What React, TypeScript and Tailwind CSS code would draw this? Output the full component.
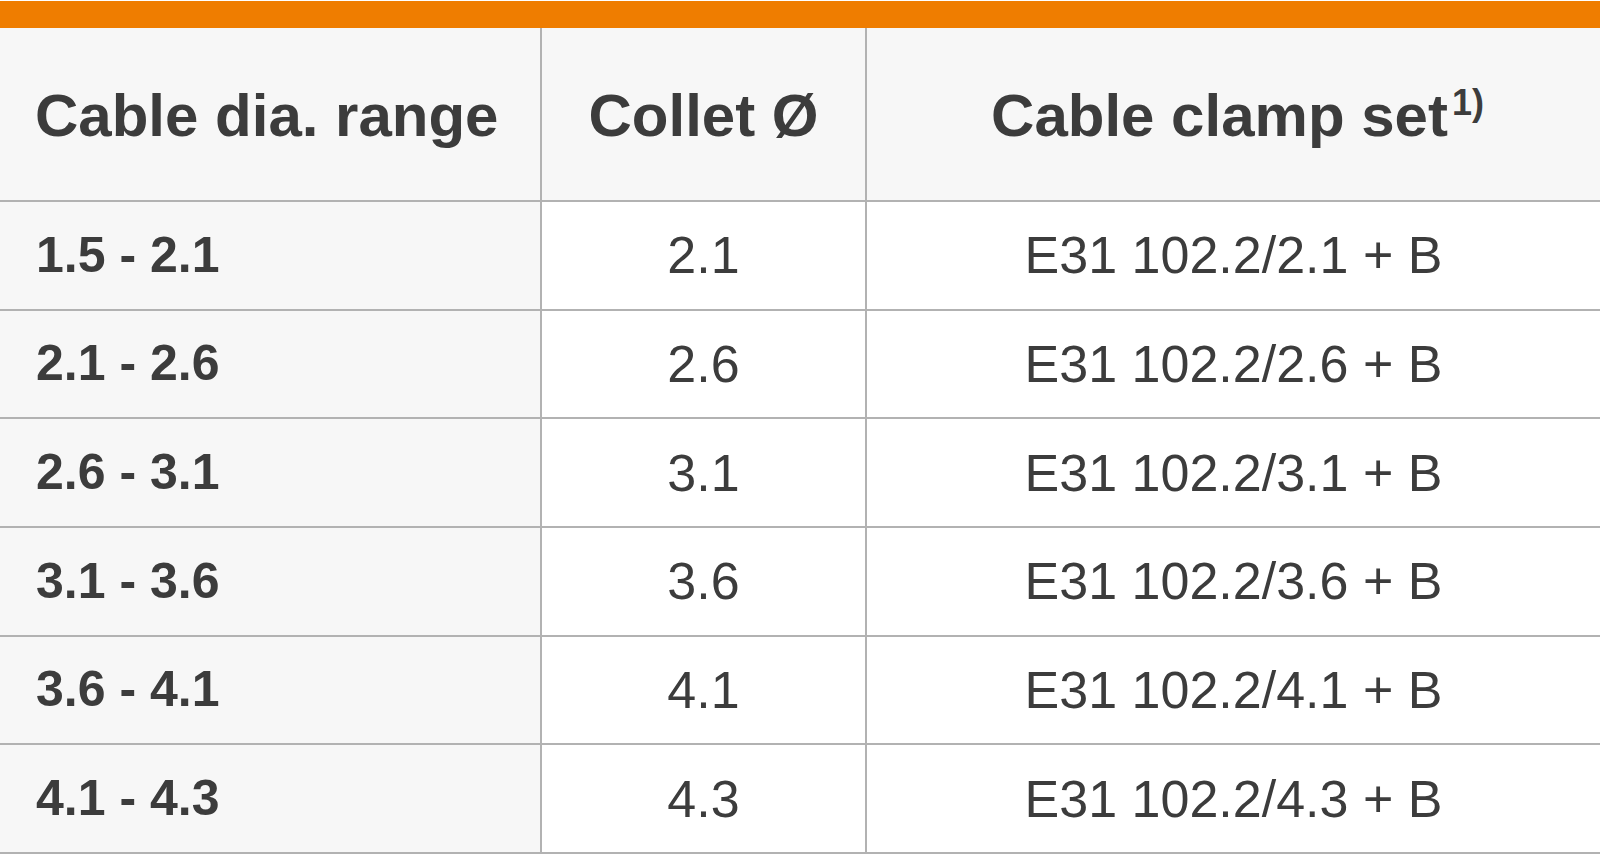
const rows = [
  { range: "1.5 - 2.1", collet: "2.1", clamp: "E31 102.2/2.1 + B" },
  { range: "2.1 - 2.6", collet: "2.6", clamp: "E31 102.2/2.6 + B" },
  { range: "2.6 - 3.1", collet: "3.1", clamp: "E31 102.2/3.1 + B" },
  { range: "3.1 - 3.6", collet: "3.6", clamp: "E31 102.2/3.6 + B" },
  { range: "3.6 - 4.1", collet: "4.1", clamp: "E31 102.2/4.1 + B" },
  { range: "4.1 - 4.3", collet: "4.3", clamp: "E31 102.2/4.3 + B" },
];

export default function App() {
  return (
    <div
      className="w-[1600px] h-[856px] overflow-hidden bg-white text-[#3c3c3c]"
      style={{ fontFamily: '"Liberation Sans", Arial, sans-serif' }}
    >
      <div className="mt-px h-[27px] bg-[#ef7d00]" />

      <div className="grid grid-cols-[542px_325px_1fr]">
        {/* header */}
        <div className="h-[174px] flex items-center pl-[35px] pt-[4px] bg-[#f7f7f7] border-b-2 border-r-2 border-[#b2b2b2] text-[60px] font-bold">
          Cable dia. range
        </div>
        <div className="h-[174px] flex items-center justify-center pt-[4px] bg-[#f7f7f7] border-b-2 border-r-2 border-[#b2b2b2] text-[60px] font-bold">
          Collet Ø
        </div>
        <div className="h-[174px] flex items-center justify-center pt-[4px] pl-[8px] bg-[#f7f7f7] border-b-2 border-[#b2b2b2] text-[60px] font-bold">
          <span>
            Cable clamp set
            <sup className="text-[36px] top-[-21px] ml-[4px]">1)</sup>
          </span>
        </div>

        {/* body */}
        {rows.map((r) => (
          <div key={r.range} className="contents">
            <div className="h-[108.67px] flex items-center pl-[36px] bg-[#f7f7f7] border-b-2 border-r-2 border-[#b2b2b2] text-[50px] font-bold">
              {r.range}
            </div>
            <div className="h-[108.67px] flex items-center justify-center bg-white border-b-2 border-r-2 border-[#b2b2b2] text-[52px]">
              {r.collet}
            </div>
            <div className="h-[108.67px] flex items-center justify-center bg-white border-b-2 border-[#b2b2b2] text-[52px]">
              {r.clamp}
            </div>
          </div>
        ))}
      </div>
    </div>
  );
}
